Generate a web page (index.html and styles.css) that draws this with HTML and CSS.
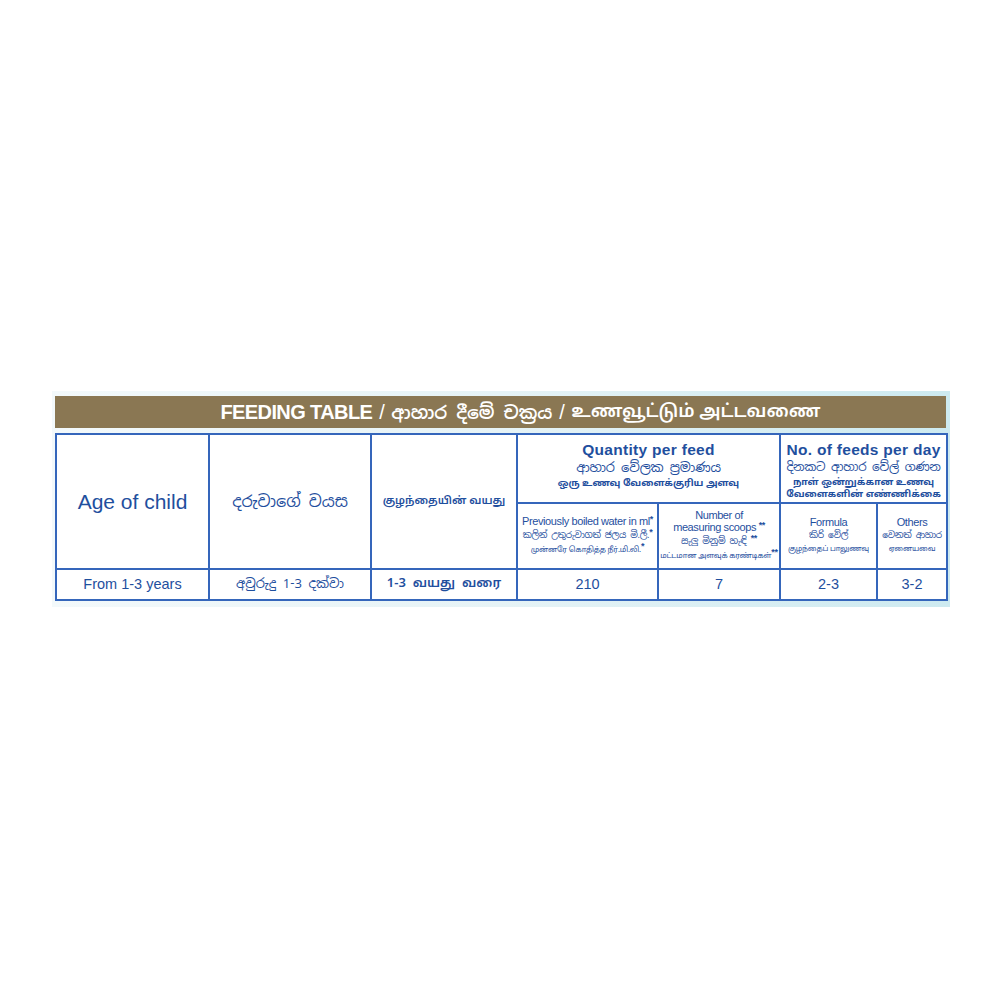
FILE: index.html
```html
<!DOCTYPE html>
<html>
<head>
<meta charset="utf-8">
<link rel="stylesheet" href="styles.css">
</head>
<body>
<div class="panel">
  <div class="title"><span>FEEDING TABLE</span><span class="slash">/</span><span class="si">ආහාර දීමේ චක්‍රය</span><span class="slash">/</span><span class="ta">உணவூட்டும் அட்டவணை</span></div>
  <table class="feed">
    <colgroup>
      <col class="c1"><col class="c2"><col class="c3"><col class="c4"><col class="c5"><col class="c6"><col class="c7">
    </colgroup>
    <tr class="h1">
      <td rowspan="2" class="age">Age of child</td>
      <td rowspan="2" class="si age-si">දරුවාගේ වයස</td>
      <td rowspan="2" class="ta age-ta">குழந்தையின் வயது</td>
      <td colspan="2" class="grp">
        <div class="grp-en">Quantity per feed</div>
        <div class="si grp-si">ආහාර වේලක ප්‍රමාණය</div>
        <div class="ta grp-ta">ஒரு உணவு வேளைக்குரிய அளவு</div>
      </td>
      <td colspan="2" class="grp">
        <div class="grp-en">No. of feeds per day</div>
        <div class="si grp-si grp-si-sm">දිනකට ආහාර වේල් ගණන</div>
        <div class="ta grp-ta grp-ta-sm">நாள் ஒன்றுக்கான உணவு<br>வேளைகளின் எண்ணிக்கை</div>
      </td>
    </tr>
    <tr class="h2">
      <td class="sub">
        <div class="sub-en">Previously boiled water in ml<span class="st">*</span></div>
        <div class="si sub-si">කලින් උතුරුවාගත් ජලය මි.ලී.<span class="st">*</span></div>
        <div class="ta sub-ta">முன்னரே கொதித்த நீர்.மி.லி.<span class="st">*</span></div>
      </td>
      <td class="sub">
        <div class="sub-en">Number of<br>measuring scoops <span class="st">**</span></div>
        <div class="si sub-si">සැලු මිනුම් හැඳි <span class="st">**</span></div>
        <div class="ta sub-ta">மட்டமான அளவுக் கரண்டிகள்<span class="st">**</span></div>
      </td>
      <td class="sub">
        <div class="sub-en">Formula</div>
        <div class="si sub-si">කිරි වේල්</div>
        <div class="ta sub-ta">குழந்தைப் பாலுணவு</div>
      </td>
      <td class="sub">
        <div class="sub-en">Others</div>
        <div class="si sub-si">වෙනත් ආහාර</div>
        <div class="ta sub-ta">ஏனையவை</div>
      </td>
    </tr>
    <tr class="data">
      <td>From 1-3 years</td>
      <td class="si">අවුරුදු 1-3 දක්වා</td>
      <td class="ta">1-3&nbsp; வயது&nbsp; வரை</td>
      <td>210</td>
      <td>7</td>
      <td>2-3</td>
      <td>3-2</td>
    </tr>
  </table>
</div>
</body>
</html>
```

FILE: styles.css
```css
html, body {
  margin: 0;
  padding: 0;
  background: #ffffff;
}
body {
  font-family: "Liberation Sans", Arial, "Noto Sans Sinhala", "Noto Sans Tamil", sans-serif;
  color: #1f4f9e;
}
.panel {
  margin: 391px 0 0 52px;
  width: 898px;
  height: 216px;
  box-sizing: border-box;
  padding: 5px 4px 6px 3px;
  background: linear-gradient(90deg, #f3f9fb 0%, #e6f3f6 50%, #cdeaf0 100%);
  display: flex;
  flex-direction: column;
  gap: 5px;
}
.si { font-family: "Noto Sans Sinhala", "Iskoola Pota", "Liberation Sans", sans-serif; }
.ta { font-family: "Noto Sans Tamil", "Latha", "Liberation Sans", sans-serif; }
.title {
  flex: 0 0 32px;
  height: 32px;
  background: #8a7753;
  color: #ffffff;
  font-weight: bold;
  font-size: 20px;
  letter-spacing: -0.6px;
  display: flex;
  align-items: center;
  justify-content: center;
  padding-left: 40px;
  white-space: nowrap;
}
.title .slash { margin: 0 7px; font-weight: normal; }
.title .si, .title .ta { font-weight: 600; font-size: 18px; letter-spacing: 0; }
.feed {
  flex: 0 0 168px;
  border-collapse: collapse;
  table-layout: fixed;
  width: 891px;
  height: 168px;
  background: #ffffff;
}
.c1 { width: 153px; }
.c2 { width: 162px; }
.c3 { width: 146px; }
.c4 { width: 141px; }
.c5 { width: 122px; }
.c6 { width: 97px; }
.c7 { width: 70px; }
.feed td {
  border: 2px solid #3566bb;
  text-align: center;
  vertical-align: middle;
  padding: 0;
  line-height: 1.1;
  white-space: nowrap;
  overflow: hidden;
}
.h1 { height: 69px; }
.h2 { height: 66px; }
.data { height: 31px; }
.age { font-size: 21px; }
.age-si { font-size: 16px; }
.age-ta { font-size: 11px; font-weight: 600; }
.grp { vertical-align: top !important; padding-top: 6px !important; }
.grp-en { font-size: 15.5px; font-weight: bold; letter-spacing: 0.3px; line-height: 17px; }
.grp-si { font-size: 13px; line-height: 19px; letter-spacing: -0.2px; }
.grp-si-sm { font-size: 12px; letter-spacing: -0.3px; }
.grp-ta { font-size: 9.5px; font-weight: bold; line-height: 14px; }
.grp-ta-sm { line-height: 12px; }
.sub-en { font-size: 11px; letter-spacing: -0.4px; line-height: 12px; }
.sub-si { font-size: 9px; letter-spacing: -0.3px; line-height: 15px; }
.sub-ta { font-size: 7.5px; letter-spacing: -0.2px; line-height: 13px; }
.st { font-family: "Liberation Sans", Arial, sans-serif; font-size: 9px; font-weight: bold; position: relative; top: -3px; }
.data td { font-size: 14.5px; }
.data td.si { font-size: 13px; }
.data td.ta { font-size: 13px; font-weight: 600; }
```
